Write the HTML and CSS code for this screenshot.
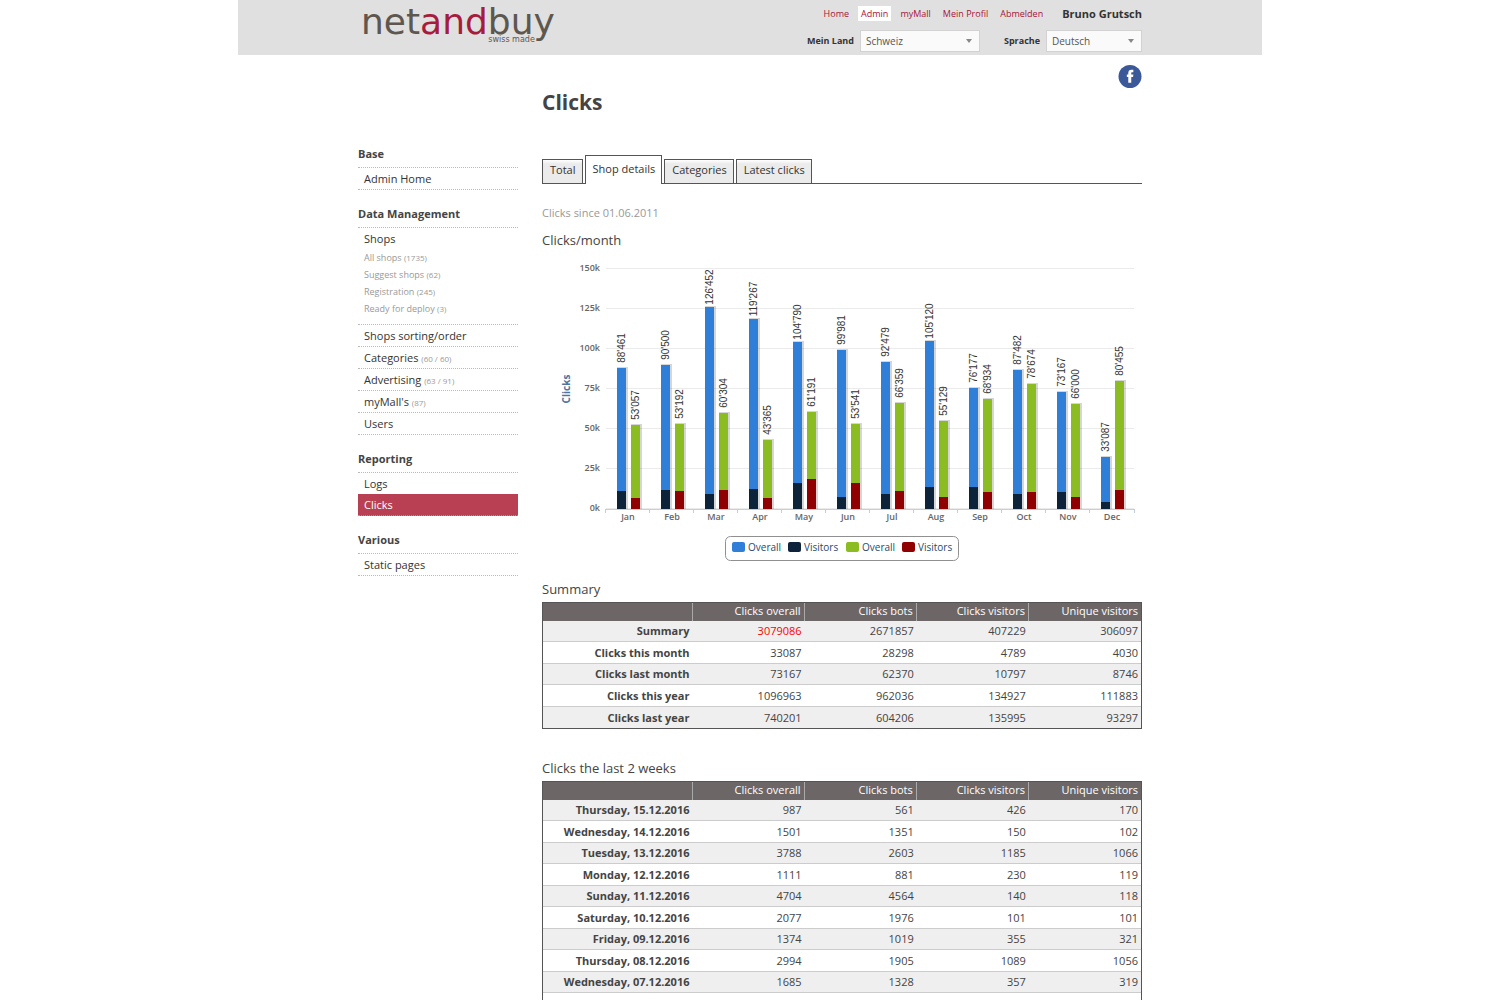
FILE: index.html
```html
<!DOCTYPE html>
<html lang="en">
<head>
<meta charset="utf-8">
<title>Clicks – netandbuy</title>
<link rel="stylesheet" href="styles.css">
</head>
<body>
<header class="site-header">
  <a class="logo" href="#"><span class="logo-name">net<span class="logo-accent">and</span>buy</span><span class="logo-tag">swiss made</span></a>
  <div class="header-tools">
    <nav class="user-nav">
      <a href="#">Home</a>
      <a href="#" class="current">Admin</a>
      <a href="#">myMall</a>
      <a href="#">Mein Profil</a>
      <a href="#">Abmelden</a>
      <strong class="user-name">Bruno Grutsch</strong>
    </nav>
    <form class="locale">
      <label for="country">Mein Land</label>
      <span class="select select-country"><select id="country"><option>Schweiz</option></select></span>
      <label for="language">Sprache</label>
      <span class="select select-language"><select id="language"><option>Deutsch</option></select></span>
    </form>
  </div>
</header>

<div class="social">
  <a href="#" aria-label="Facebook">
    <svg class="social-icon" viewBox="0 0 24 24" aria-hidden="true"><circle cx="12" cy="12" r="12" fill="#3b5998"/><path d="M10.2 18.6V12.6H8.7V9.9h1.5V8.4c0-2.3 1.1-3.5 3.3-3.5h2v2.7h-1.2c-.8 0-1 .4-1 1.1v1.2h2.2l-.3 2.7h-1.9v6z" fill="#fff"/></svg>
  </a>
</div>

<div class="columns">
  <nav class="sidebar">
    <h2>Base</h2>
    <ul>
      <li><a href="#">Admin Home</a></li>
    </ul>
    <h2>Data Management</h2>
    <ul>
      <li><a href="#">Shops</a>
        <ul class="sub">
          <li><a href="#">All shops <small>(1735)</small></a></li>
          <li><a href="#">Suggest shops <small>(62)</small></a></li>
          <li><a href="#">Registration <small>(245)</small></a></li>
          <li><a href="#">Ready for deploy <small>(3)</small></a></li>
        </ul>
      </li>
      <li><a href="#">Shops sorting/order</a></li>
      <li><a href="#">Categories <small>(60 / 60)</small></a></li>
      <li><a href="#">Advertising <small>(63 / 91)</small></a></li>
      <li><a href="#">myMall's <small>(87)</small></a></li>
      <li><a href="#">Users</a></li>
    </ul>
    <h2>Reporting</h2>
    <ul>
      <li><a href="#">Logs</a></li>
      <li class="active"><a href="#">Clicks</a></li>
    </ul>
    <h2>Various</h2>
    <ul>
      <li><a href="#">Static pages</a></li>
    </ul>
  </nav>

  <main class="content">
    <h1>Clicks</h1>
    <nav class="tabs">
      <a href="#">Total</a>
      <a href="#" class="active">Shop details</a>
      <a href="#">Categories</a>
      <a href="#">Latest clicks</a>
    </nav>
    <p class="note">Clicks since 01.06.2011</p>

    <h2>Clicks/month</h2>
    <svg class="chart" id="chart" viewBox="0 0 600 320" role="img" aria-label="Clicks per month"></svg>

    <h2>Summary</h2>
    <table class="stats">
      <thead><tr><th></th><th>Clicks overall</th><th>Clicks bots</th><th>Clicks visitors</th><th>Unique visitors</th></tr></thead>
      <tbody>
        <tr><th>Summary</th><td class="alert">3079086</td><td>2671857</td><td>407229</td><td>306097</td></tr>
        <tr><th>Clicks this month</th><td>33087</td><td>28298</td><td>4789</td><td>4030</td></tr>
        <tr><th>Clicks last month</th><td>73167</td><td>62370</td><td>10797</td><td>8746</td></tr>
        <tr><th>Clicks this year</th><td>1096963</td><td>962036</td><td>134927</td><td>111883</td></tr>
        <tr><th>Clicks last year</th><td>740201</td><td>604206</td><td>135995</td><td>93297</td></tr>
      </tbody>
    </table>

    <h2>Clicks the last 2 weeks</h2>
    <table class="stats">
      <thead><tr><th></th><th>Clicks overall</th><th>Clicks bots</th><th>Clicks visitors</th><th>Unique visitors</th></tr></thead>
      <tbody>
        <tr><th>Thursday, 15.12.2016</th><td>987</td><td>561</td><td>426</td><td>170</td></tr>
        <tr><th>Wednesday, 14.12.2016</th><td>1501</td><td>1351</td><td>150</td><td>102</td></tr>
        <tr><th>Tuesday, 13.12.2016</th><td>3788</td><td>2603</td><td>1185</td><td>1066</td></tr>
        <tr><th>Monday, 12.12.2016</th><td>1111</td><td>881</td><td>230</td><td>119</td></tr>
        <tr><th>Sunday, 11.12.2016</th><td>4704</td><td>4564</td><td>140</td><td>118</td></tr>
        <tr><th>Saturday, 10.12.2016</th><td>2077</td><td>1976</td><td>101</td><td>101</td></tr>
        <tr><th>Friday, 09.12.2016</th><td>1374</td><td>1019</td><td>355</td><td>321</td></tr>
        <tr><th>Thursday, 08.12.2016</th><td>2994</td><td>1905</td><td>1089</td><td>1056</td></tr>
        <tr><th>Wednesday, 07.12.2016</th><td>1685</td><td>1328</td><td>357</td><td>319</td></tr>
        <tr><th>Tuesday, 06.12.2016</th><td></td><td></td><td></td><td></td></tr>
      </tbody>
    </table>
  </main>
</div>
<script src="chart.js"></script>
</body>
</html>
```
FILE: styles.css
```css
* { box-sizing: border-box; }

body {
  margin: 0;
  background: #fff;
  color: #444;
  font: 11px/16px "Open Sans", sans-serif;
}

a { color: inherit; text-decoration: none; }
h1, h2, p, ul { margin: 0; padding: 0; }
ul { list-style: none; }

/* Header */
.site-header,
.social,
.columns {
  max-width: 1024px;
  margin: 0 auto;
  padding: 0 120px;
}

.site-header {
  display: flex;
  justify-content: space-between;
  min-height: 55px;
  background: #e0e0e0;
}

.logo {
  position: relative;
  padding: 4px 0 0 3px;
  color: #5d5750;
  font-family: "DejaVu Sans", sans-serif;
}
.logo-name { display: block; font-size: 36px; line-height: 36px; }
.logo-accent { color: #a71c3d; }
.logo-tag {
  position: absolute;
  right: 20px;
  top: 35px;
  font-size: 8px;
  line-height: 10px;
}

.header-tools {
  display: flex;
  flex-direction: column;
  align-items: flex-end;
  gap: 9px;
  padding-top: 6px;
}
.user-nav {
  display: flex;
  align-items: center;
  gap: 6px;
  color: #a9123a;
  font-size: 9px;
  line-height: 15px;
}
.user-nav a { padding: 0 3px; }
.user-nav .current { background: #fff; }
.user-name { margin-left: 10px; color: #333; font-size: 11px; }

.locale { display: flex; align-items: center; font-size: 9px; }
.locale label { margin-right: 6px; color: #333; font-weight: 700; }
.select { position: relative; height: 22px; }
.select-country { width: 120px; margin-right: 24px; }
.select-language { width: 96px; }
.select select {
  width: 100%;
  height: 22px;
  padding: 0 5px;
  border: 1px solid #d2d2d2;
  border-radius: 0;
  background: #fafafa;
  color: #555;
  font: inherit;
  font-size: 10px;
  appearance: none;
}
.select::after {
  content: "";
  position: absolute;
  right: 8px;
  top: 9px;
  border: 3px solid transparent;
  border-top: 4px solid #888;
  border-bottom: 0;
}

.social { display: flex; justify-content: flex-end; padding-top: 10px; }
.social-icon { display: block; width: 24px; height: 23px; }

/* Columns */
.columns { display: flex; gap: 24px; }

.sidebar { flex: 0 0 160px; padding-top: 21px; }
.sidebar h2 {
  margin-top: 16px;
  padding-bottom: 5px;
  font-size: 11px;
  line-height: 16px;
}
.sidebar h2:first-child { margin-top: 37px; }
.sidebar ul { border-top: 1px dotted #bbb; color: #333; }
.sidebar li { border-bottom: 1px dotted #bbb; }
.sidebar li a { display: block; padding: 0 6px; line-height: 21px; }
.sidebar small { color: #999; font-size: 8px; line-height: 8px; }
.sidebar .sub { padding-bottom: 7px; border: 0; color: #999; font-size: 9px; }
.sidebar .sub li { border: 0; }
.sidebar .sub a { line-height: 17px; }
.sidebar .active {
  margin-top: -1px;
  border-bottom-color: #ce808d;
  background: #b94052;
  color: #fff;
}

.content { flex: 1; min-width: 0; }
.content h1 { font-size: 21px; line-height: 28px; }
.content h2 { font-size: 13px; font-weight: 400; line-height: 20px; }

.tabs {
  display: flex;
  align-items: flex-end;
  gap: 2px;
  margin-top: 39px;
  border-bottom: 1px solid #555;
}
.tabs a {
  padding: 2px 6px 5px 7px;
  border: 1px solid #555;
  border-bottom: 0;
  background: linear-gradient(#fff, #ebebeb 4px);
  color: #333;
}
.tabs .active {
  margin-bottom: -1px;
  padding: 5px 6px 7px 7px;
  background: #fff;
}

.note { margin-top: 21px; color: #999; }
.note + h2 { margin-top: 9px; }

/* Chart */
.chart {
  display: block;
  width: 100%;
  margin-bottom: 9px;
  font-family: "Open Sans", sans-serif;
}
.chart .grid { stroke: #ebebeb; }
.chart .axis { fill: none; stroke: #c0d0e0; }
.chart .tick { fill: #666; font-size: 9px; font-weight: 600; }
.chart .month { text-anchor: middle; }
.chart .scale { text-anchor: end; }
.chart .title { fill: #4d759e; font-size: 10px; font-weight: 700; text-anchor: middle; }
.chart .value { fill: #333; font: 10px "Liberation Sans", sans-serif; text-anchor: middle; }
.chart .shadow { fill: #000; fill-opacity: .16; }
.chart .shop { fill: #2f7ed8; }
.chart .shop-visitors { fill: #0d233a; }
.chart .mall { fill: #8bbc21; }
.chart .mall-visitors { fill: #910000; }
.chart .legend-box { fill: #fff; stroke: #909090; }
.chart .legend-text { fill: #274b6d; font-size: 10px; }

/* Tables */
.stats {
  width: 100%;
  margin: 3px 0 29px;
  border: 1px solid #555;
  border-collapse: separate;
  border-spacing: 0;
  table-layout: fixed;
  text-align: right;
}
.stats th, .stats td { padding: 0 3px; line-height: 16px; }
.stats th:first-child { width: 25%; }
.stats thead th {
  height: 18px;
  padding-bottom: 2px;
  border-right: 1px solid #aaa;
  background: #6d6666;
  color: #fff;
  font-weight: 400;
}
.stats thead th:last-child { border-right: 0; }
.stats tbody th, .stats tbody td { height: 22px; border-bottom: 1px solid #ccc; }
.stats tbody tr:nth-child(odd) > * { height: 21px; background: #efefef; }
.stats tbody tr:last-child > * { border-bottom: 0; }
.stats .alert { color: #f00; }
```
FILE: chart.js
```js
const months = [
  // name, shop clicks, shop visitors, mall clicks, mall visitors
  ["Jan", 88461, 11300, 53057, 7300],
  ["Feb", 90500, 11900, 53192, 11300],
  ["Mar", 126452, 9700, 60304, 11900],
  ["Apr", 119267, 13100, 43365, 7300],
  ["May", 104790, 16300, 61191, 18800],
  ["Jun", 99981, 7600, 53541, 16300],
  ["Jul", 92479, 9400, 66359, 11300],
  ["Aug", 105120, 13800, 55129, 7600],
  ["Sep", 76177, 13800, 68934, 10700],
  ["Oct", 87482, 9700, 78674, 10700],
  ["Nov", 73167, 10797, 66000, 7600],
  ["Dec", 33087, 4789, 80455, 11900]
];

const left = 64, base = 259, step = 44, barWidth = 9;
const scale = value => Math.floor(value * 240 / 150000);
const parts = [];

for (let k = 0; k <= 150; k += 25) {
  const y = base - scale(k * 1000);
  parts.push(`<path class="grid" d="M${left} ${y - .5}H592"/>`);
  parts.push(`<text class="tick scale" x="58" y="${y + 2}">${k}k</text>`);
}

function bar(x, total, visitors, name) {
  const h = scale(total), v = scale(visitors), top = base - h;
  parts.push(`<rect class="shadow" x="${x}" y="${top - 1}" width="${barWidth + 2}" height="${h + 1}"/>`);
  parts.push(`<rect class="${name}" x="${x}" y="${top}" width="${barWidth}" height="${h - v}"/>`);
  parts.push(`<rect class="${name}-visitors" x="${x}" y="${base - v}" width="${barWidth}" height="${v}"/>`);
  const label = String(total).replace(/(\d{3})$/, "'$1");
  parts.push(`<text class="value" transform="translate(${x + 8} ${top - 20}) rotate(-90)">${label}</text>`);
}

let axis = `M${left} ${base + .5}H592`;
months.forEach(([name, shop, shopVisitors, mall, mallVisitors], i) => {
  const x = left + i * step;
  bar(x + 11, shop, shopVisitors, "shop");
  bar(x + 25, mall, mallVisitors, "mall");
  parts.push(`<text class="tick month" x="${x + 22}" y="270">${name}</text>`);
  axis += `M${x - .5} ${base}v4`;
});
parts.push(`<path class="axis" d="${axis}M592.5 ${base}v4"/>`);
parts.push(`<text class="title" transform="translate(28 139) rotate(-90)">Clicks</text>`);

parts.push(`<rect class="legend-box" x="183.5" y="286.5" width="233" height="24" rx="5"/>`);
[["shop", "Overall", 190], ["shop-visitors", "Visitors", 246], ["mall", "Overall", 304], ["mall-visitors", "Visitors", 360]]
  .forEach(([name, text, x]) => {
    parts.push(`<rect class="${name}" x="${x}" y="292" width="13" height="10" rx="2"/>`);
    parts.push(`<text class="legend-text" x="${x + 16}" y="301">${text}</text>`);
  });

document.getElementById("chart").innerHTML = parts.join("");
```
